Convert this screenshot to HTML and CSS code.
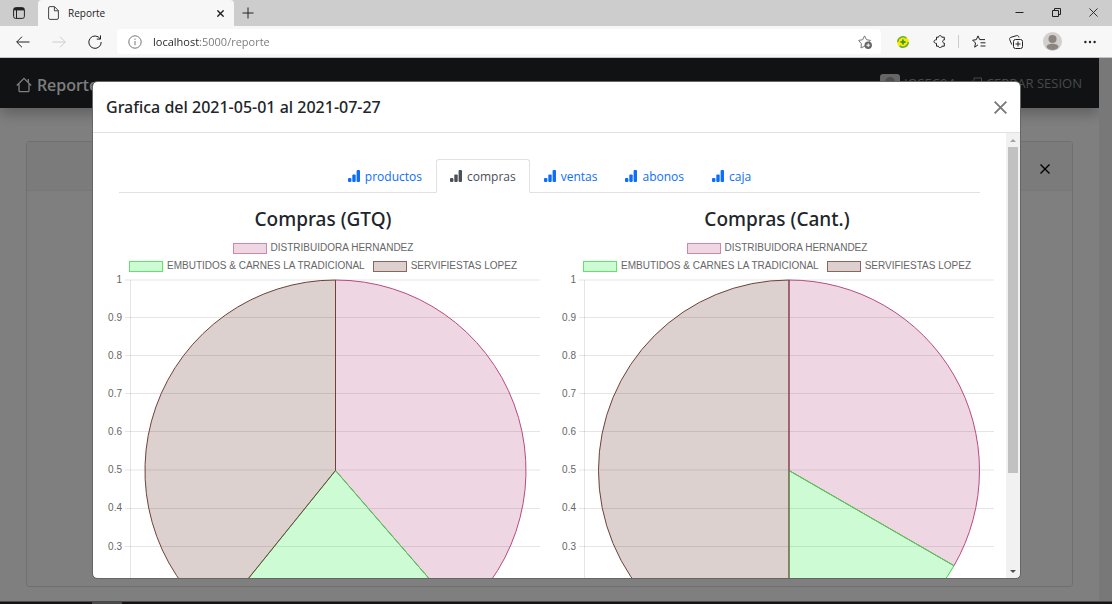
FILE: index.html
```html
<!DOCTYPE html>
<html lang="es">
<head>
<meta charset="utf-8">
<title>Reporte</title>
<link rel="stylesheet" href="styles.css">
</head>
<body>
<svg class="defs" aria-hidden="true">
  <symbol id="bars" viewBox="0 0 12 12"><rect x="0" y="8" width="3.400" height="4" rx="1"/><rect x="4.300" y="4.500" width="3.400" height="7.500" rx="1"/><rect x="8.600" y="0" width="3.400" height="12" rx="1"/></symbol>
  <symbol id="cross" viewBox="0 0 10 10"><path d="M.5.5l9 9M9.5.5l-9 9"/></symbol>
</svg>
<div class="window">
  <header class="titlebar">
    <button class="workspaces" aria-label="Pestañas"><svg width="12" height="12" viewBox="0 0 12 12"><rect x=".6" y=".6" width="10.8" height="10.8" rx="2"/><path d="M1 2.2h10" stroke-width="2.4"/><path d="M3.5 3v8"/></svg></button>
    <div class="tab">
      <svg width="11" height="14" viewBox="0 0 11 14"><path d="M2 .6h4.5l3.9 4V12a1.4 1.4 0 0 1-1.4 1.4H2A1.4 1.4 0 0 1 .6 12V2A1.4 1.4 0 0 1 2 .6zM6.4.8v4h4"/></svg>
      <span class="tab-title">Reporte</span>
      <button aria-label="Cerrar pestaña"><svg class="thick" width="7" height="7"><use href="#cross"/></svg></button>
    </div>
    <button class="new-tab" aria-label="Nueva pestaña"><svg width="12" height="12" viewBox="0 0 12 12"><path d="M6 .5v11M.5 6h11"/></svg></button>
    <div class="controls">
      <button aria-label="Minimizar"><svg width="9" height="9" viewBox="0 0 9 9"><path d="M.5 4.5h8"/></svg></button>
      <button aria-label="Restaurar"><svg width="9" height="9" viewBox="0 0 9 9"><path d="M.5 2.5h6v6h-6zM2.5 2.5v-2h6v6h-2"/></svg></button>
      <button aria-label="Cerrar"><svg width="9" height="9"><use href="#cross"/></svg></button>
    </div>
  </header>
  <div class="toolbar">
    <div class="history">
      <button aria-label="Atrás"><svg width="14" height="12" viewBox="0 0 14 12"><path d="M13.5 6H.8M6 .7L.7 6 6 11.3"/></svg></button>
      <button class="off" aria-label="Adelante" disabled><svg width="14" height="12" viewBox="0 0 14 12"><path d="M.5 6h12.7M8 .7L13.3 6 8 11.3"/></svg></button>
      <button aria-label="Actualizar"><svg width="14" height="14" viewBox="0 0 14 14"><path d="M12.2 3.8A6.2 6.2 0 1 0 13.2 7M12.5.4v3.7H8.8"/></svg></button>
    </div>
    <div class="address">
      <svg class="gray" width="14" height="14" viewBox="0 0 14 14"><circle cx="7" cy="7" r="6.2"/><path d="M7 6v4.2M7 3.6v1.3"/></svg>
      <input aria-label="Dirección" value="localhost:5000/reporte">
      <svg class="gray" width="14" height="14" viewBox="0 0 14 14"><path d="M7 11L3 13l.4-4.200L.7 5.400l4-.7L6.500.9l2 3.800 4 .7-1.500 1.500"/><circle cx="10.200" cy="10.200" r="3.700" fill="#666" stroke="none"/><path d="M8.400 10.200h3.600M10.200 8.400V12" stroke="#fff"/></svg>
    </div>
    <div class="tools">
      <button aria-label="Extensión"><svg width="12" height="12" viewBox="0 0 12 12"><circle cx="6" cy="6" r="6" fill="#f7ea00" stroke="none"/><path d="M.8 6a5.200 5.200 0 0 1 8.600-3.900M11.200 6a5.200 5.200 0 0 1-8.600 3.900" stroke="#65ad43" stroke-width="1.400"/><path d="M6 3.500v5M3.500 6h5" stroke="#3f9741" stroke-width="1.800"/></svg></button>
      <button aria-label="Extensiones"><svg width="13" height="13" viewBox="0 0 13 13"><path d="M3.500 2.200h2C5.300.2 9 .2 8.800 2.200h2.500v2.800c-2.200-.2-2.200 3.200 0 3v3.200H8.800c.2 2-3.500 2-3.300 0h-2V8.400C.2 8.600.2 4.600 3.500 4.800z"/></svg></button>
      <span class="divider"></span>
      <button aria-label="Favoritos"><svg width="14" height="13" viewBox="0 0 14 13"><path d="M6 9.800L2.700 12.200l.8-4.200L.7 5.200l3.600-.5L6 .9l1.700 3.700H13M8.500 7.800H13.500M8.500 11h5"/></svg></button>
      <button aria-label="Colecciones"><svg width="14" height="14" viewBox="0 0 14 14"><rect x="4.500" y="4.500" width="9" height="9" rx="2"/><path d="M9 6.500v5M6.500 9h5M2.800 9.600L.7 4.600C.3 3.500.8 2.700 1.700 2.400L7.700.6C8.700.4 9.700.8 10 2.500"/></svg></button>
      <button aria-label="Perfil"><svg class="solid" width="19" height="19" viewBox="0 0 19 19"><circle cx="9.500" cy="9.500" r="9.500" fill="#d2cfcc"/><circle cx="9.500" cy="7" r="4" fill="#8b8580"/><path d="M3.500 15c0-4.500 12-4.500 12 0-2 4-10 4-12 0z" fill="#8b8580"/></svg></button>
      <button aria-label="Más"><svg class="solid" width="12" height="4" viewBox="0 0 12 4"><circle cx="1.400" cy="2" r="1.200"/><circle cx="6" cy="2" r="1.200"/><circle cx="10.600" cy="2" r="1.200"/></svg></button>
    </div>
  </div>

  <div class="viewport">
    <div class="page">
      <nav class="navbar">
        <a class="brand" href="#"><svg width="16" height="16" viewBox="0 0 16 16"><path d="M.8 8.500L8 1.300l7.200 7.200M3 7v6.500c0 .8.300 1.200 1.200 1.200h7.600c.9 0 1.200-.4 1.200-1.200V7M12.300 5.500V2" stroke-width="1.300"/></svg>Reporte</a>
        <a class="nav-item" href="#"><svg class="solid" width="20" height="18" viewBox="0 0 20 18"><rect width="20" height="18" rx="3" fill="#ccc"/><circle cx="10" cy="8" r="5" fill="#999"/></svg>JOSEC94</a>
        <a class="nav-item" href="#"><svg width="13" height="13" viewBox="0 0 13 13"><path d="M5 3.500V1h7.500v11H5V9.500M9 6.500H.8M3.500 3.500l-3 3 3 3"/></svg>CERRAR SESION</a>
      </nav>
      <main class="card">
        <div class="card-header"><button aria-label="Cerrar reporte"><svg class="medium" width="10" height="10"><use href="#cross"/></svg></button></div>
      </main>
    </div>
    <div class="page-scroll"></div>

    <div class="backdrop">
      <section class="modal" role="dialog" aria-labelledby="modal-title">
        <div class="modal-header">
          <h5 id="modal-title">Grafica del 2021-05-01 al 2021-07-27</h5>
          <button aria-label="Cerrar"><svg class="medium" width="13" height="13"><use href="#cross"/></svg></button>
        </div>
        <div class="modal-body">
          <div class="scroll-content">
            <nav class="tabs">
              <a href="#"><svg width="12" height="12"><use href="#bars"/></svg>productos</a>
              <a class="active" href="#"><svg width="12" height="12"><use href="#bars"/></svg>compras</a>
              <a href="#"><svg width="12" height="12"><use href="#bars"/></svg>ventas</a>
              <a href="#"><svg width="12" height="12"><use href="#bars"/></svg>abonos</a>
              <a href="#"><svg width="12" height="12"><use href="#bars"/></svg>caja</a>
            </nav>
            <div class="charts">
              <article class="chart">
                <h4>Compras (GTQ)</h4>
                <div class="legend">
                  <span class="key pink">DISTRIBUIDORA HERNANDEZ</span>
                  <span class="key green">EMBUTIDOS &amp; CARNES LA TRADICIONAL</span>
                  <span class="key brown">SERVIFIESTAS LOPEZ</span>
                </div>
                <svg class="plot" viewBox="0 3 434 400">
                  <path class="gridline" d="M19 8H434M19 45.500H434M19 83.500H434M19 121.500H434M19 159.500H434M19 198H434M19 236.500H434M19 274.500H434M19 312.500H434M19 350.500H434M19 389H434M24.500 8V395"/>
                  <g class="tick"><text x="16" y="11">1</text><text x="16" y="49">0.9</text><text x="16" y="87">0.8</text><text x="16" y="125">0.7</text><text x="16" y="163">0.6</text><text x="16" y="201">0.5</text><text x="16" y="239">0.4</text><text x="16" y="278">0.3</text></g>
                  <path class="pink" d="M229.500 198.500V8A190.500 190.500 0 0 1 354.200 342.500z"/>
                  <path class="green" d="M229.500 198.500L354.200 342.500A190.500 190.500 0 0 1 109.900 346.800z"/>
                  <path class="brown" d="M229.500 198.500L109.900 346.800A190.500 190.500 0 0 1 229.500 8z"/>
                </svg>
              </article>
              <article class="chart">
                <h4>Compras (Cant.)</h4>
                <div class="legend">
                  <span class="key pink">DISTRIBUIDORA HERNANDEZ</span>
                  <span class="key green">EMBUTIDOS &amp; CARNES LA TRADICIONAL</span>
                  <span class="key brown">SERVIFIESTAS LOPEZ</span>
                </div>
                <svg class="plot" viewBox="0 3 434 400">
                  <path class="gridline" d="M19 8H434M19 45.500H434M19 83.500H434M19 121.500H434M19 159.500H434M19 198H434M19 236.500H434M19 274.500H434M19 312.500H434M19 350.500H434M19 389H434M24.500 8V395"/>
                  <g class="tick"><text x="16" y="11">1</text><text x="16" y="49">0.9</text><text x="16" y="87">0.8</text><text x="16" y="125">0.7</text><text x="16" y="163">0.6</text><text x="16" y="201">0.5</text><text x="16" y="239">0.4</text><text x="16" y="278">0.3</text></g>
                  <path class="pink" d="M229 198.500V8A190.500 190.500 0 0 1 394 293.700z"/>
                  <path class="green" d="M229 198.500L394 293.700A190.500 190.500 0 0 1 229 389z"/>
                  <path class="brown" d="M229 198.500V389A190.500 190.500 0 0 1 229 8z"/>
                </svg>
              </article>
            </div>
          </div>
          <div class="scrollbar"><span class="arrow up"></span><span class="thumb"></span><span class="arrow down"></span></div>
        </div>
      </section>
    </div>
  </div>
  <footer class="taskbar"><span></span></footer>
</div>
</body>
</html>
```
FILE: styles.css
```css
*, *::before { box-sizing: border-box; }
body { margin: 0; font-family: "Open Sans", "Noto Sans", sans-serif; color: #212529; }
.defs { position: absolute; width: 0; height: 0; }
svg { flex: none; display: block; fill: none; stroke: currentColor; }
button { display: flex; align-items: center; justify-content: center; padding: 0; border: 0; background: none; color: #222; }
a { text-decoration: none; }
h4, h5 { margin: 0; font-family: "Noto Sans", sans-serif; font-weight: 500; }
.thick { stroke-width: 2; }
.medium { stroke-width: 1.4; }
.solid { fill: currentColor; stroke: none; }

.window { display: flex; flex-direction: column; height: 100vh; overflow: hidden; }

.titlebar { display: flex; flex: none; height: 26px; background: #cdcdcd; }
.workspaces { width: 38px; }
.tab { display: flex; align-items: center; gap: 9px; width: 196px; padding: 0 10px; background: #f7f7f7; border-radius: 4px 4px 0 0; color: #444; }
.tab-title { flex: 1; font-size: 10px; color: #222; }
.new-tab { width: 28px; }
.controls { display: flex; margin-left: auto; }
.controls button { width: 37px; height: 24px; }

.toolbar { display: flex; flex: none; align-items: center; height: 32px; background: #f7f7f7; border-bottom: 1px solid #c4c4c4; }
.history { display: flex; width: 117px; padding-left: 5px; }
.history button { width: 36px; }
.history .off { color: #ccc; }
.address { display: flex; flex: 1; align-items: center; gap: 11px; height: 25px; padding: 0 9px 0 11px; background: #fff; border-radius: 4px; }
.gray { color: #777; }
.address input { flex: 1; min-width: 0; padding: 0; border: 0; outline: 0; font: 11px "Open Sans", sans-serif; color: transparent; background: linear-gradient(90deg, #222 47px, #777 47px); background-clip: text; -webkit-background-clip: text; }
.tools { display: flex; align-items: center; width: 231px; padding-left: 3px; }
.tools button { width: 37px; flex: none; }
.tools button:nth-of-type(2) { width: 36px; }
.divider { width: 1px; height: 13px; margin: 0 1px; background: #ccc; }

.viewport { position: relative; display: flex; flex: 1; min-height: 0; background: #fff; }
.page { display: flex; flex: 1; flex-direction: column; min-width: 0; overflow: hidden; }
.page-scroll { width: 13px; background: #f1f1f1; }
.navbar { display: flex; flex: none; align-items: center; gap: 14px; height: 50px; padding: 0 17px 0 16px; background: #212529; box-shadow: 0 6px 13px rgba(0, 0, 0, .25); }
.brand { display: flex; align-items: center; gap: 5px; margin-right: auto; padding-top: 3px; font-family: "Noto Sans", sans-serif; font-size: 16px; font-weight: 500; color: #fff; }
.nav-item { display: flex; align-items: center; gap: 4px; font-size: 13px; color: #909294; }
.card { flex: 1; margin: 33px 26px 14px; border: 1px solid #dfdfdf; border-radius: 3px; }
.card-header { display: flex; justify-content: flex-end; height: 49px; padding: 0 22px; background: #f7f7f7; border-bottom: 1px solid #efefef; }
.card-header button { padding-top: 6px; color: #000; }

.backdrop { position: absolute; inset: 0; display: flex; padding: 24px 92px 23px 93px; background: rgba(0, 0, 0, .5); }
.modal { display: flex; flex: 1; flex-direction: column; min-width: 0; background: #fff; border-radius: 4px; outline: 1px solid #666; overflow: hidden; }
.modal-header { display: flex; flex: none; align-items: center; justify-content: space-between; height: 51px; padding: 0 13px; border-bottom: 1px solid #dee2e6; }
.modal-header h5 { font-size: 16px; }
.modal-header button { color: #777; }
.modal-body { display: flex; flex: 1; min-height: 0; }
.scroll-content { flex: 1; min-width: 0; padding-top: 26px; overflow: hidden auto; scrollbar-width: none; }
.tabs { display: flex; justify-content: center; margin: 0 26px; border-bottom: 1px solid #dee2e6; }
.tabs a { display: flex; align-items: center; gap: 5px; height: 34px; margin-bottom: -1px; padding: 0 13px; border: 1px solid transparent; border-radius: 3px 3px 0 0; font-size: 12px; color: #0d6efd; }
.tabs .active { color: #495057; background: #fff; border-color: #dee2e6 #dee2e6 #fff; }
.tabs svg { fill: currentColor; stroke: none; }

.charts { display: grid; grid-template-columns: 1fr 1fr; gap: 20px; padding: 12px 12px 0 13px; }
.chart h4 { font-size: 19px; line-height: 28px; text-align: center; }
.legend { display: flex; flex-wrap: wrap; justify-content: center; gap: 0 8px; padding: 6px 16px 0; }
.key { display: flex; align-items: center; gap: 4px; font: 10px/18px "Liberation Sans", Arial, sans-serif; color: #666; white-space: nowrap; }
.key::before { content: ""; width: 34px; height: 11px; margin-top: 1px; border: 1px solid; }
.key.pink::before { background: #eed6e2; border-color: #cf86a9; }
.key.green::before { background: #cdfbd3; border-color: #5de56a; }
.key.brown::before { background: #dcd1ce; border-color: #8d655e; }
.plot { width: 100%; height: auto; overflow: visible; }
.gridline { stroke: rgba(0, 0, 0, .1); }
.tick { font: 10px "Liberation Sans", Arial, sans-serif; fill: #666; stroke: none; text-anchor: end; }
.plot .pink { fill: rgba(171, 50, 111, .2); stroke: #b74b80; }
.plot .green { fill: rgba(5, 235, 34, .2); stroke: #3ed54b; }
.plot .brown { fill: rgba(80, 25, 10, .2); stroke: #70413a; }

.scrollbar { display: flex; flex: none; flex-direction: column; align-items: center; width: 14px; background: #f1f1f1; }
.thumb { width: 10px; height: 326px; margin-bottom: auto; background: #c1c1c1; }
.arrow { display: flex; align-items: center; justify-content: center; width: 14px; height: 14px; }
.arrow::before { content: ""; border: 3px solid transparent; }
.arrow.up::before { border-top: 0; border-bottom-color: #a3a3a3; }
.arrow.down::before { border-bottom: 0; border-top-color: #505050; }

.taskbar { flex: none; height: 3px; padding-left: 92px; background: #171213; border-top: 1px solid #4a4a4a; }
.taskbar span { display: block; width: 30px; height: 2px; background: #4a4a4a; }
```
